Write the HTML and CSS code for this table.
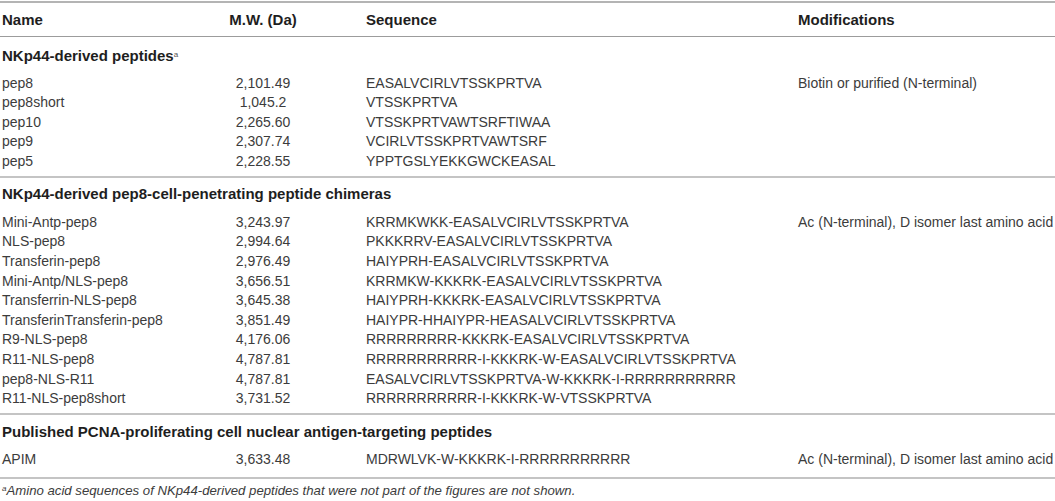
FILE: index.html
```html
<!DOCTYPE html>
<html>
<head>
<meta charset="utf-8">
<link rel="stylesheet" href="styles.css">
</head>
<body>
<table class="peptides">
  <colgroup>
    <col class="c-name"><col class="c-mw"><col class="c-seq"><col class="c-mod">
  </colgroup>
  <thead>
    <tr><th class="name">Name</th><th class="mw">M.W. (Da)</th><th class="seq">Sequence</th><th class="mod">Modifications</th></tr>
  </thead>
  <tbody class="group first">
    <tr class="sec"><td colspan="4">NKp44-derived peptides<sup class="fn">a</sup></td></tr>
    <tr><td class="name">pep8</td><td class="mw">2,101.49</td><td class="seq">EASALVCIRLVTSSKPRTVA</td><td class="mod">Biotin or purified (N-terminal)</td></tr>
    <tr><td class="name">pep8short</td><td class="mw">1,045.2</td><td class="seq">VTSSKPRTVA</td><td class="mod"></td></tr>
    <tr><td class="name">pep10</td><td class="mw">2,265.60</td><td class="seq">VTSSKPRTVAWTSRFTIWAA</td><td class="mod"></td></tr>
    <tr><td class="name">pep9</td><td class="mw">2,307.74</td><td class="seq">VCIRLVTSSKPRTVAWTSRF</td><td class="mod"></td></tr>
    <tr class="last"><td class="name">pep5</td><td class="mw">2,228.55</td><td class="seq">YPPTGSLYEKKGWCKEASAL</td><td class="mod"></td></tr>
  </tbody>
  <tbody class="group">
    <tr class="sec"><td colspan="4">NKp44-derived pep8-cell-penetrating peptide chimeras</td></tr>
    <tr><td class="name">Mini-Antp-pep8</td><td class="mw">3,243.97</td><td class="seq">KRRMKWKK-EASALVCIRLVTSSKPRTVA</td><td class="mod">Ac (N-terminal), D isomer last amino acid</td></tr>
    <tr><td class="name">NLS-pep8</td><td class="mw">2,994.64</td><td class="seq">PKKKRRV-EASALVCIRLVTSSKPRTVA</td><td class="mod"></td></tr>
    <tr><td class="name">Transferin-pep8</td><td class="mw">2,976.49</td><td class="seq">HAIYPRH-EASALVCIRLVTSSKPRTVA</td><td class="mod"></td></tr>
    <tr><td class="name">Mini-Antp/NLS-pep8</td><td class="mw">3,656.51</td><td class="seq">KRRMKW-KKKRK-EASALVCIRLVTSSKPRTVA</td><td class="mod"></td></tr>
    <tr><td class="name">Transferrin-NLS-pep8</td><td class="mw">3,645.38</td><td class="seq">HAIYPRH-KKKRK-EASALVCIRLVTSSKPRTVA</td><td class="mod"></td></tr>
    <tr><td class="name">TransferinTransferin-pep8</td><td class="mw">3,851.49</td><td class="seq">HAIYPR-HHAIYPR-HEASALVCIRLVTSSKPRTVA</td><td class="mod"></td></tr>
    <tr><td class="name">R9-NLS-pep8</td><td class="mw">4,176.06</td><td class="seq">RRRRRRRRR-KKKRK-EASALVCIRLVTSSKPRTVA</td><td class="mod"></td></tr>
    <tr><td class="name">R11-NLS-pep8</td><td class="mw">4,787.81</td><td class="seq">RRRRRRRRRRR-I-KKKRK-W-EASALVCIRLVTSSKPRTVA</td><td class="mod"></td></tr>
    <tr><td class="name">pep8-NLS-R11</td><td class="mw">4,787.81</td><td class="seq">EASALVCIRLVTSSKPRTVA-W-KKKRK-I-RRRRRRRRRRR</td><td class="mod"></td></tr>
    <tr class="last"><td class="name">R11-NLS-pep8short</td><td class="mw">3,731.52</td><td class="seq">RRRRRRRRRRR-I-KKKRK-W-VTSSKPRTVA</td><td class="mod"></td></tr>
  </tbody>
  <tbody class="group final">
    <tr class="sec"><td colspan="4">Published PCNA-proliferating cell nuclear antigen-targeting peptides</td></tr>
    <tr class="last"><td class="name">APIM</td><td class="mw">3,633.48</td><td class="seq">MDRWLVK-W-KKKRK-I-RRRRRRRRRRR</td><td class="mod">Ac (N-terminal), D isomer last amino acid</td></tr>
  </tbody>
</table>
<p class="footnote"><sup class="fn">a</sup>Amino acid sequences of NKp44-derived peptides that were not part of the figures are not shown.</p>
</body>
</html>
```
FILE: styles.css
```css
html, body {
  margin: 0;
  padding: 0;
  background: #ffffff;
}
body {
  font-family: "Liberation Sans", Arial, sans-serif;
  font-size: 14px;
  color: #3c3c3c;
  width: 1055px;
}
.peptides {
  width: 1055px;
  margin-top: 1px;
  border-collapse: collapse;
  table-layout: fixed;
  border-top: 2px solid #b4b4b4;
}
.c-name { width: 200px; }
.c-mw { width: 126px; }
.c-seq { width: 470px; }
.c-mod { width: 259px; }

.peptides th,
.peptides td {
  padding: 0;
  line-height: 19.6px;
  white-space: nowrap;
  vertical-align: middle;
}
.peptides th {
  font-weight: bold;
  font-size: 15px;
  color: #1e1e1e;
  padding-top: 6.5px;
  padding-bottom: 7px;
  border-bottom: 1px solid #9c9c9c;
  text-align: left;
}
.name { padding-left: 2px !important; }
.mw { text-align: center !important; }
.seq { padding-left: 40px !important; text-align: left; }
.mod { padding-left: 2px !important; text-align: left; }

.sec td {
  font-weight: bold;
  font-size: 15px;
  color: #1e1e1e;
  padding-left: 2px;
  padding-top: 6.5px;
  padding-bottom: 9px;
}
.group.first .sec td {
  padding-top: 9px;
  padding-bottom: 8px;
}
.group.final .sec td {
  padding-top: 7px;
  padding-bottom: 9px;
}
.group .last td {
  padding-bottom: 4px;
}
.group.final .last td {
  padding-bottom: 7px;
}
.group {
  border-bottom: 2px solid #c4c4c4;
}
.fn {
  font-size: 8px;
  font-weight: normal;
  vertical-align: top;
  line-height: 1;
  position: relative;
  top: 2px;
}
.sec .fn {
  color: #555;
  top: 5px;
}
.footnote {
  margin: 4px 0 0 2px;
  font-size: 13.2px;
  font-style: italic;
  line-height: 16px;
  color: #3c3c3c;
}
```
